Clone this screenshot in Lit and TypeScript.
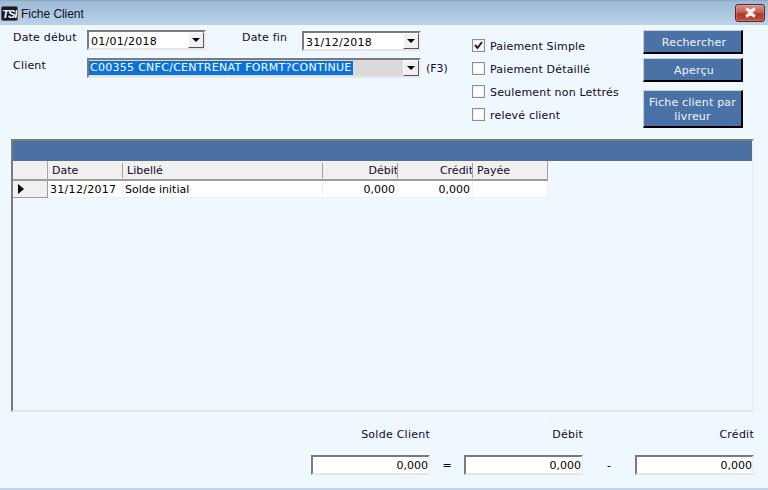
import { LitElement, html, css } from "lit";
import { customElement } from "lit/decorators.js";

const arrow = html`<span class="drop"><svg width="8" height="4" viewBox="0 0 8 4"><path d="M0 0h8L4 4z" fill="#000"/></svg></span>`;

@customElement("app-root")
export class AppRoot extends LitElement {
  static styles = css`
    :host { display: block; width: 768px; height: 490px; overflow: hidden; font: 11px "DejaVu Sans", Verdana, sans-serif; color: #12082a; background: #eff7ff; }
    .win { height: 490px; box-sizing: border-box; border-bottom: 2px solid #bcd4ee; display: flex; flex-direction: column; }
    .title { height: 25px; flex: none; box-sizing: border-box; display: flex; align-items: center; padding: 2px 3px 0 1px; background: linear-gradient(#9db8d4, #b9d3ec); box-shadow: inset 0 1px 0 #8ea9c4; font: 12px "Liberation Sans", Arial, sans-serif; color: #101020; }
    .logo { width: 17px; height: 15px; background: #16182e; color: #fff; font: italic bold 11px/14px "Liberation Sans", sans-serif; text-align: center; margin-right: 3px; border: 1px solid #6a5a60; border-radius: 2px; box-sizing: border-box; letter-spacing: -.8px; overflow: hidden; }
    .t { flex: 1; letter-spacing: -.05px; }
    .close { width: 30px; height: 18px; margin: -2px 0 0 0; box-sizing: border-box; border: 1px solid #5c2630; border-radius: 3px; background: linear-gradient(#d8938a 0, #c4574a 50%, #ae3322 55%, #c0553f); display: flex; align-items: center; justify-content: center; box-shadow: inset 0 0 0 1px #e2b0aa55; }

    .top { height: 114px; flex: none; display: flex; padding-top: 5px; box-sizing: border-box; }
    .fields { width: 472px; flex: none; padding-left: 13px; box-sizing: border-box; display: flex; flex-direction: column; gap: 8px; }
    .row { display: flex; align-items: flex-start; height: 20px; }
    .lab { width: 74px; flex: none; letter-spacing: .2px; padding-top: 1px; line-height: 13px; }
    .combo { box-sizing: border-box; height: 20px; display: flex; align-items: center; background: #fff; border: 2px solid; border-color: #7b7b7b #f0f0f0 #e6e6e6 #7b7b7b; padding-left: 2px; font-size: 11px; color: #000; position: relative; }
    .d1 { width: 119px; }
    .d2 { width: 119px; margin-top: 1px; }
    .lab2 { margin-left: 36px; width: 60px; flex: none; padding-top: 1px; line-height: 13px; letter-spacing: .2px; }
    .txt { flex: 1; line-height: 13px; margin-top: 2px; white-space: nowrap; letter-spacing: .25px; }
    .drop { position: absolute; right: 0; top: 0; bottom: 0; width: 16px; background: #f0f0f0; border: 1px solid; border-color: #fff #555 #555 #fff; box-sizing: border-box; display: flex; align-items: center; justify-content: center; }
    .cl { width: 334px; background: #dadada; padding-left: 0; }
    .sel { background: #0a72d8; color: #fff; padding: 0 1px; line-height: 14px; height: 14px; letter-spacing: .28px; }
    .f3 { margin-left: 5px; padding-top: 4px; line-height: 13px; }

    .checks { width: 171px; flex: none; display: flex; flex-direction: column; padding-top: 9px; gap: 10px; }
    .ck { display: flex; align-items: flex-start; gap: 5px; height: 13px; line-height: 15px; letter-spacing: .18px; }
    .box { width: 13px; height: 13px; flex: none; box-sizing: border-box; background: #fff; border: 1px solid #8f8f8f; box-shadow: inset 0 0 0 1px #eeeeee; display: flex; align-items: center; justify-content: center; }

    .btns { width: 100px; flex: none; display: flex; flex-direction: column; gap: 4px; }
    .btn { box-sizing: border-box; width: 100px; height: 24px; background: #4a72a6; color: #eef4fb; border: 1px solid; border-color: #c4d2e2 #000 #000 #c4d2e2; border-width: 1px 2px 2px 1px; display: flex; align-items: center; justify-content: center; text-align: center; line-height: 14px; letter-spacing: .2px; padding: 2px 0 0 3px; }
    .big { height: 38px; margin-top: 4px; padding: 3px 0 0 0; }

    .panel { margin-left: 11px; width: 743px; height: 273px; flex: none; box-sizing: border-box; border: 2px solid; border-color: #7b7b7b #f0f0f0 #e6e6e6 #7b7b7b; }
    .bar { height: 20px; background: #4a6fa2; border-bottom: 1px solid #5e6c7c; box-sizing: border-box; }
    .grid { display: grid; grid-template-columns: 35px 75px 200px 75px 75px 75px; width: 535px; }
    .h { height: 20px; background: #f0f0f0; border-bottom: 2px solid #9c9c9c; box-sizing: border-box; line-height: 19px; padding: 0 0 0 4px; position: relative; white-space: nowrap; overflow: hidden; }
    .h.r { text-align: right; padding: 0; }
    .h.sep::after { content: ""; position: absolute; right: 0; top: 2px; height: 15px; width: 1px; background: #a0a0a0; }
    .h.ind { border-right: 1px solid #a6a6a6; }
    .h.last { border-right: 1px solid #a0a0a0; }
    .c { height: 17px; background: #fff; border-bottom: 1px solid #eef0f2; border-right: 1px solid #eef0f2; box-sizing: border-box; line-height: 18px; color: #000; white-space: nowrap; padding-left: 2px; }
    .c.dt { letter-spacing: .3px; }
    .c.r { text-align: right; padding: 0 2px 0 0; }
    .c.i { background: #f0f0f0; border-bottom: 1px solid #9c9c9c; border-right: 1px solid #9c9c9c; display: flex; align-items: center; padding-left: 5px; }

    .foot { flex: 1; display: flex; flex-direction: column; padding-top: 16px; box-sizing: border-box; }
    .fl, .fi { display: flex; margin-left: 311px; }
    .fl span { width: 119px; text-align: right; letter-spacing: .25px; line-height: 13px; }
    .fl span + span { margin-left: 34px; }
    .fl span + span + span { margin-left: 52px; }
    .fi { margin-top: 14px; align-items: center; }
    .in { box-sizing: border-box; width: 119px; height: 20px; background: #fff; border: 2px solid; border-color: #7b7b7b #f0f0f0 #e6e6e6 #7b7b7b; text-align: right; padding: 2px 0 0 0; line-height: 14px; color: #000; }
    .op { width: 34px; text-align: center; color: #000; }
    .op.w { width: 52px; }
  `;

  render() {
    return html`<div class="win">
      <div class="title">
        <div class="logo">TSI</div><div class="t">Fiche Client</div>
        <div class="close"><svg width="15" height="11" viewBox="0 0 15 11"><path d="M3 1.5l4.5 2.5 4.5-2.5M3 9.5l4.5-2.5 4.5 2.5M3 1.5l9 8M12 1.5l-9 8" stroke="#f4f0f0" stroke-width="2.6" fill="none" stroke-linejoin="round"/></svg></div>
      </div>
      <div class="top">
        <div class="fields">
          <div class="row">
            <div class="lab">Date début</div>
            <div class="combo d1"><span class="txt">01/01/2018</span>${arrow}</div>
            <div class="lab2">Date fin</div>
            <div class="combo d2"><span class="txt">31/12/2018</span>${arrow}</div>
          </div>
          <div class="row">
            <div class="lab">Client</div>
            <div class="combo cl"><span class="sel">C00355 CNFC/CENTRENAT FORMT?CONTINUE</span>${arrow}</div>
            <div class="f3">(F3)</div>
          </div>
        </div>
        <div class="checks">
          <div class="ck"><span class="box"><svg width="9" height="9" viewBox="0 0 9 9"><path d="M1 4l2.5 3L8 1" stroke="#222" stroke-width="2" fill="none"/></svg></span>Paiement Simple</div>
          <div class="ck"><span class="box"></span>Paiement Détaillé</div>
          <div class="ck"><span class="box"></span>Seulement non Lettrés</div>
          <div class="ck"><span class="box"></span>relevé client</div>
        </div>
        <div class="btns">
          <div class="btn">Rechercher</div>
          <div class="btn">Aperçu</div>
          <div class="btn big">Fiche client par<br />livreur</div>
        </div>
      </div>
      <div class="panel">
        <div class="bar"></div>
        <div class="grid">
          <div class="h ind"></div>
          <div class="h sep">Date</div>
          <div class="h sep">Libellé</div>
          <div class="h r sep">Débit</div>
          <div class="h r sep">Crédit</div>
          <div class="h last">Payée</div>
          <div class="c i"><svg width="6" height="10" viewBox="0 0 6 10"><path d="M0 0l6 5-6 5z" fill="#000"/></svg></div>
          <div class="c dt">31/12/2017</div>
          <div class="c">Solde initial</div>
          <div class="c r">0,000</div>
          <div class="c r">0,000</div>
          <div class="c"></div>
        </div>
      </div>
      <div class="foot">
        <div class="fl"><span>Solde Client</span><span>Débit</span><span>Crédit</span></div>
        <div class="fi">
          <div class="in">0,000</div><div class="op">=</div>
          <div class="in">0,000</div><div class="op w">-</div>
          <div class="in">0,000</div>
        </div>
      </div>
    </div>`;
  }
}
